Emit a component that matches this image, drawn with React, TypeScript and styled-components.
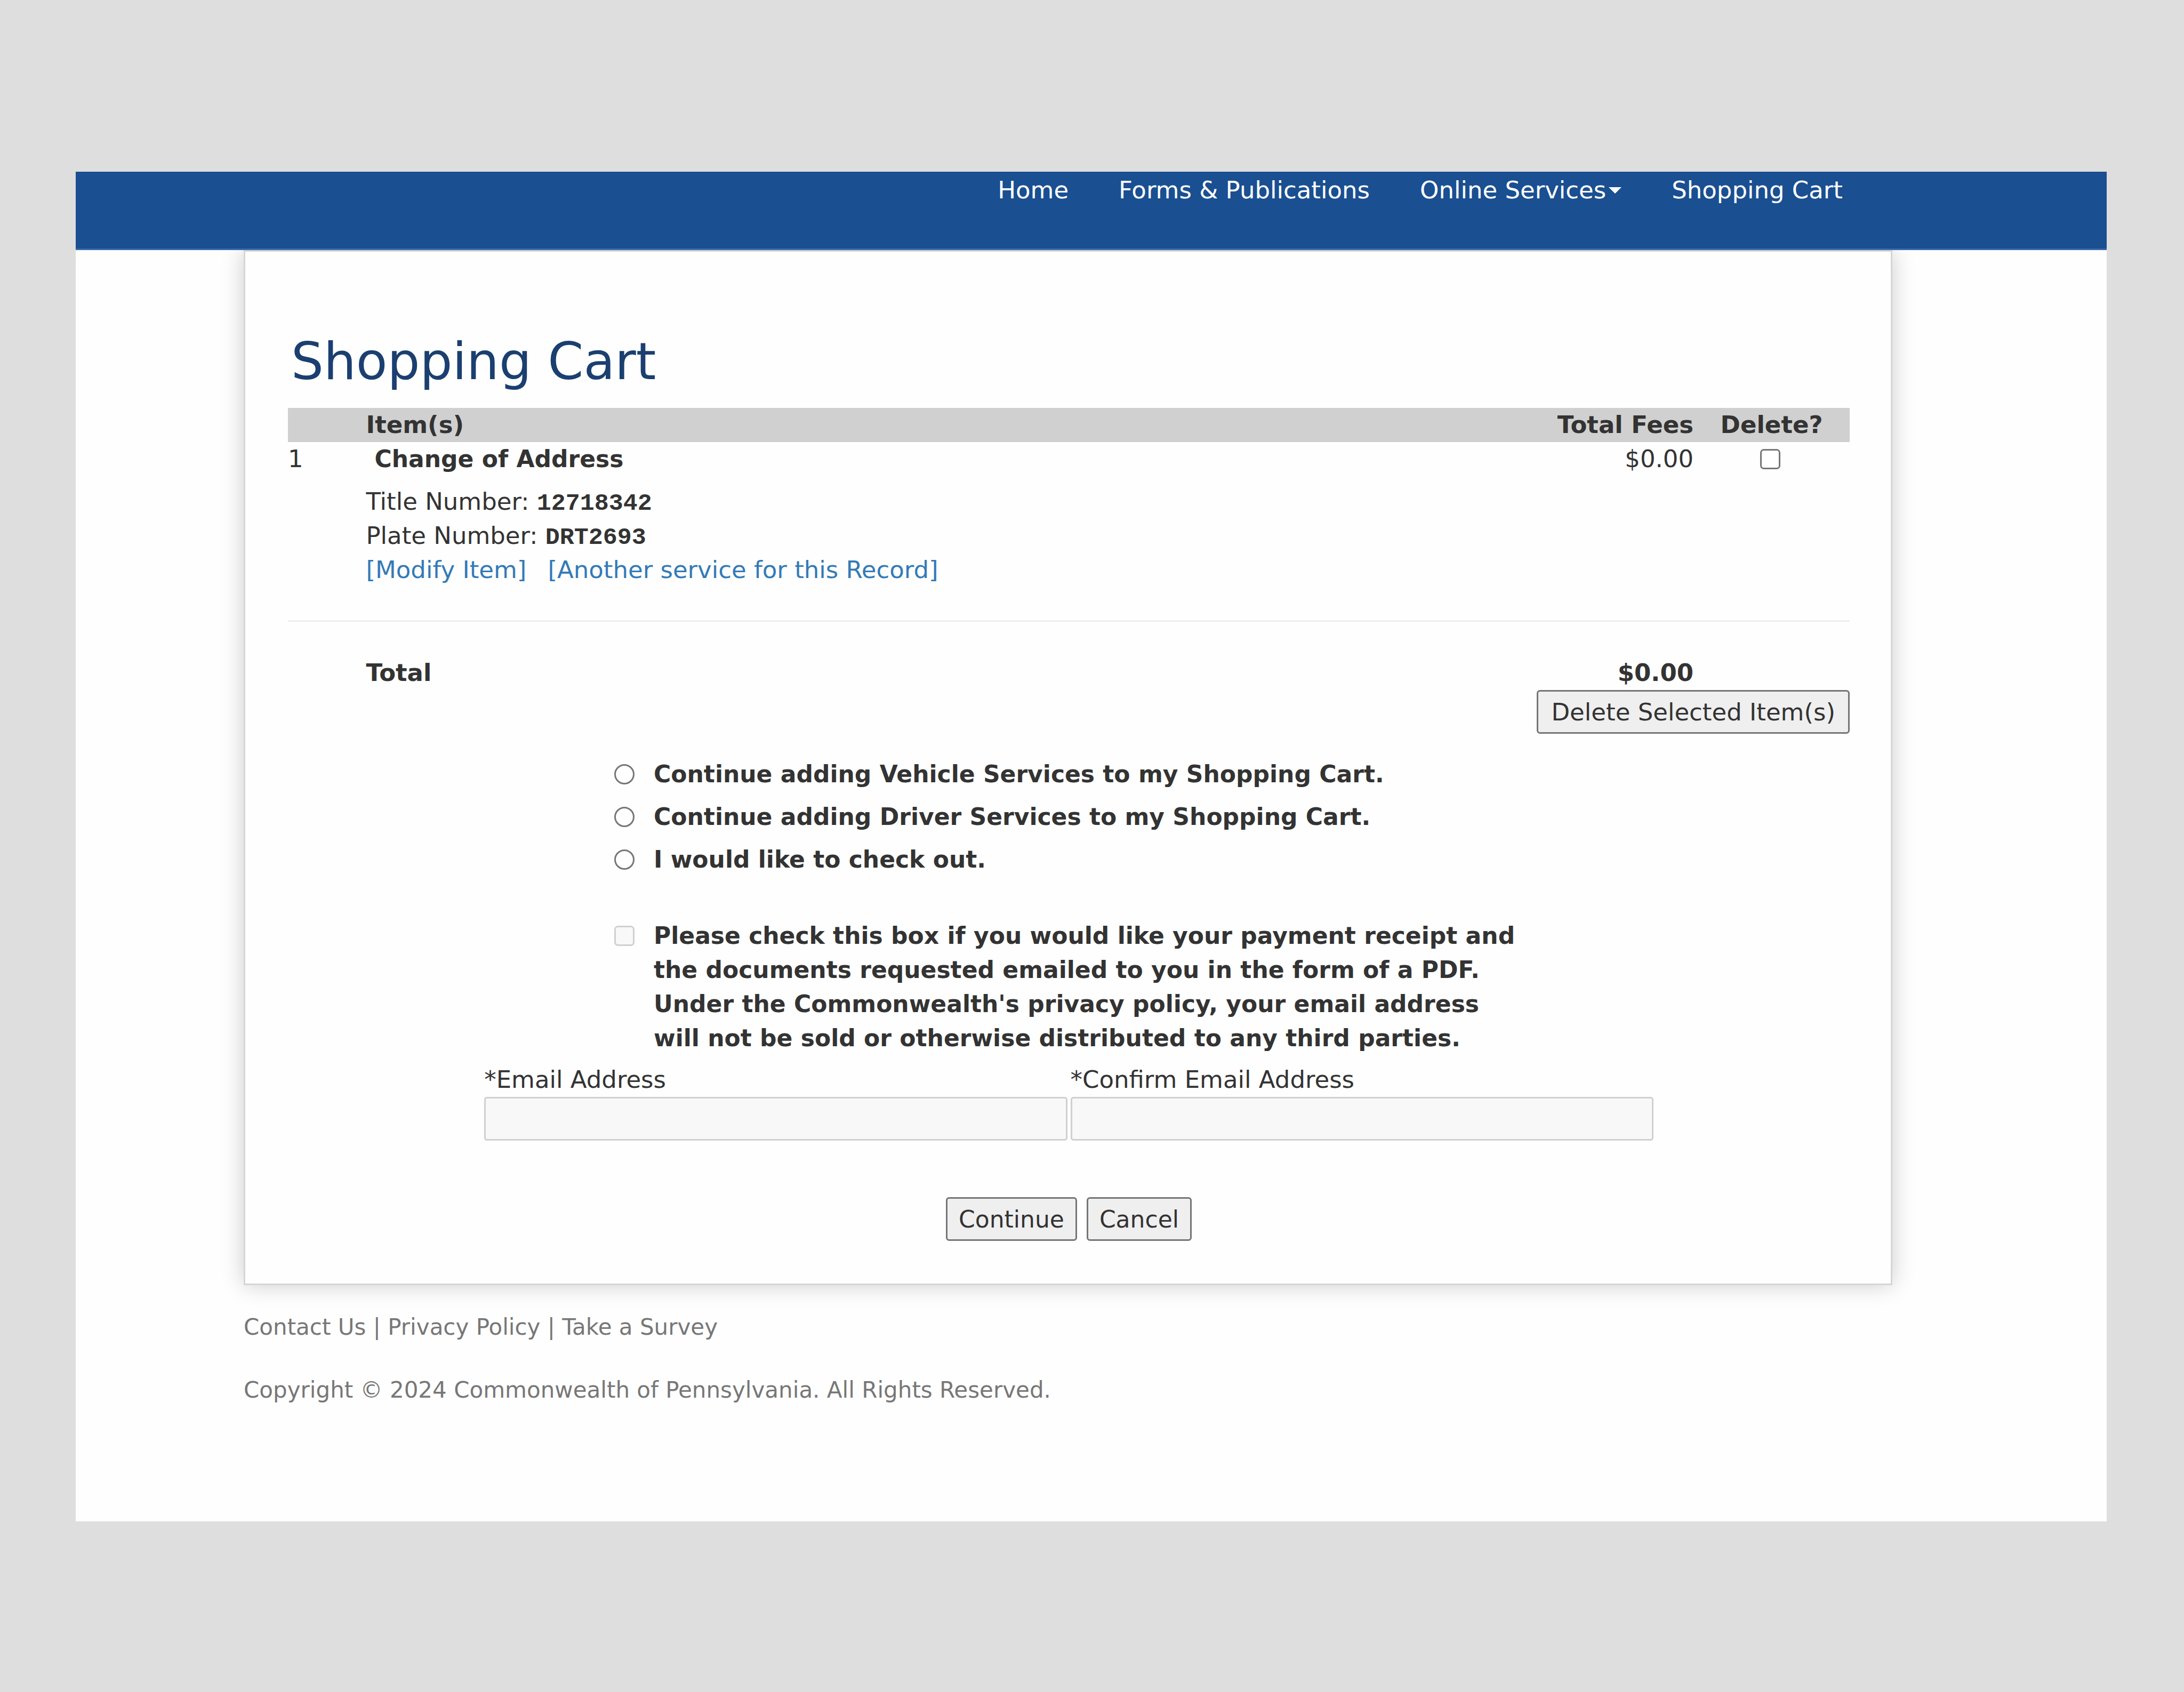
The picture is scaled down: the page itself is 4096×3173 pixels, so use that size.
import React from "react";
import styled, { createGlobalStyle } from "styled-components";

const Global = createGlobalStyle`
  *, *::before, *::after { box-sizing: border-box; }
  body {
    margin: 0;
    background: #dedede;
    color: #333;
    font: 45px/64px "DejaVu Sans", Verdana, sans-serif;
  }
  button, input { font: inherit; color: inherit; margin: 0; }
`;

const Page = styled.div`
  padding: 322px 145px 321px 142px;
`;

const Frame = styled.div`
  background: #fefefe;
`;

const NavBar = styled.nav`
  display: flex;
  justify-content: flex-end;
  gap: 94px;
  height: 147px;
  padding-right: 495px;
  background: #1a4f91;
  border-bottom: 3px solid #3a69ab;
`;

const NavLink = styled.a`
  display: flex;
  align-items: center;
  height: 70px;
  color: #fff;
  text-decoration: none;
`;

const Caret = styled.span`
  width: 24px;
  margin-left: 5px;
  border: 12px solid transparent;
  border-top-color: #fff;
  border-bottom: 0;
`;

const Card = styled.main`
  margin: 0 402px 0 315px;
  padding: 156px 77px 80px 80px;
  border: 3px solid #d6d6d6;
  box-shadow: 0 0 40px rgba(0, 0, 0, 0.2);
  clip-path: inset(0 -80px -80px -80px);
`;

const Title = styled.h1`
  margin: 0 0 37px;
  padding: 0 6px;
  font-size: 96px;
  font-weight: 400;
  line-height: 100px;
  color: #1a3f70;
`;

const CartTable = styled.table`
  width: 100%;
  table-layout: fixed;
  border-collapse: collapse;
`;

const Col = styled.col<{ $share: number }>`
  width: ${(p) => p.$share}%;
`;

const Cell = styled.td<{ $align?: string; $strong?: boolean }>`
  padding: 0;
  vertical-align: top;
  text-align: ${(p) => p.$align ?? "left"};
  font-weight: ${(p) => (p.$strong ? 700 : 400)};
`;

const TickCell = styled(Cell)`
  padding-right: 6px;
`;

const HeadRow = styled.tr`
  background: #d0d0d0;
`;

const ItemName = styled.div`
  margin: 0 0 16px 16px;
  font-size: 44px;
  font-weight: 700;
`;

const Code = styled.span`
  font: 700 45px/45px "Liberation Mono", monospace;
`;

const Links = styled.div`
  display: flex;
  gap: 40px;
`;

const TextLink = styled.a`
  color: #337ab7;
  text-decoration: none;
`;

const RuleCell = styled.td`
  padding: 62px 0 64px;
`;

const Rule = styled.hr`
  margin: 0;
  border: 0;
  border-top: 3px solid #eee;
`;

const Tick = styled.input`
  appearance: none;
  display: block;
  flex: none;
  width: 38px;
  height: 38px;
  margin: 13px auto;
  border: 3px solid #767676;
  border-radius: ${(p) => (p.type === "radio" ? "50%" : "7px")};
  background: #fff;
  &:disabled {
    border-color: #d0d0d0;
    background: #f8f8f8;
  }
`;

const Button = styled.button<{ $compact?: boolean }>`
  padding: ${(p) => (p.$compact ? "7px 21px 5px" : "7px 24px 5px")};
  border: 3px solid #767676;
  border-radius: 6px;
  background: #efefef;
  font-size: ${(p) => (p.$compact ? 44 : 45)}px;
`;

const ActionRow = styled.div<{ $align: string }>`
  display: flex;
  justify-content: ${(p) => p.$align};
  gap: 18px;
`;

const Choices = styled.div`
  display: flex;
  flex-direction: column;
  gap: 16px;
  margin: 44px 0 79px 612px;
`;

const Choice = styled.label`
  display: flex;
  align-items: flex-start;
  gap: 36px;
  max-width: 1704px;
  font-size: 44px;
  font-weight: 700;
  ${Tick} { margin: 13px 0; }
`;

const Receipt = styled.div`
  margin: 0 0 14px 612px;
`;

const Emails = styled.div`
  display: grid;
  grid-template-columns: 1fr 1fr;
  gap: 6px;
  width: calc(75% - 4px);
  margin: 0 auto 106px;
`;

const Field = styled.label`
  display: block;
`;

const TextBox = styled.input`
  display: block;
  width: 100%;
  height: 82px;
  border: 3px solid #d0d0d0;
  border-radius: 5px;
  background: #f8f8f8;
`;

const Footer = styled.footer`
  display: flex;
  flex-direction: column;
  gap: 54px;
  padding: 47px 0 214px 315px;
  color: #777;
  font-size: 42px;
  p { margin: 0; }
`;

const FootLink = styled.a`
  color: inherit;
  text-decoration: none;
`;

const choices = [
  "Continue adding Vehicle Services to my Shopping Cart.",
  "Continue adding Driver Services to my Shopping Cart.",
  "I would like to check out.",
];

export default function App() {
  return (
    <Page>
      <Global />
      <Frame>
        <NavBar>
          <NavLink href="#">Home</NavLink>
          <NavLink href="#">Forms &amp; Publications</NavLink>
          <NavLink href="#">
            Online Services
            <Caret />
          </NavLink>
          <NavLink href="#">Shopping Cart</NavLink>
        </NavBar>
        <Card>
          <Title>Shopping Cart</Title>
          <CartTable>
            <colgroup>
              <Col $share={5} />
              <Col $share={65} />
              <Col $share={20} />
              <Col $share={10} />
            </colgroup>
            <thead>
              <HeadRow>
                <Cell />
                <Cell as="th" scope="col" $strong>Item(s)</Cell>
                <Cell as="th" scope="col" $strong $align="right">Total Fees</Cell>
                <Cell as="th" scope="col" $strong $align="center">Delete?</Cell>
              </HeadRow>
            </thead>
            <tbody>
              <tr>
                <Cell>1</Cell>
                <Cell>
                  <ItemName>Change of Address</ItemName>
                  <div>Title Number: <Code>12718342</Code></div>
                  <div>Plate Number: <Code>DRT2693</Code></div>
                  <Links>
                    <TextLink href="#">[Modify Item]</TextLink>
                    <TextLink href="#">[Another service for this Record]</TextLink>
                  </Links>
                </Cell>
                <Cell $align="right">$0.00</Cell>
                <TickCell><Tick type="checkbox" aria-label="Delete item 1" /></TickCell>
              </tr>
              <tr>
                <RuleCell colSpan={4}><Rule /></RuleCell>
              </tr>
              <tr>
                <Cell />
                <Cell $strong>Total</Cell>
                <Cell $strong $align="right">$0.00</Cell>
                <Cell />
              </tr>
            </tbody>
          </CartTable>
          <ActionRow $align="flex-end">
            <Button type="button">Delete Selected Item(s)</Button>
          </ActionRow>
          <Choices>
            {choices.map((text) => (
              <Choice key={text}>
                <Tick type="radio" name="next" />
                {text}
              </Choice>
            ))}
          </Choices>
          <Receipt>
            <Choice>
              <Tick type="checkbox" disabled />
              Please check this box if you would like your payment receipt and the
              documents requested emailed to you in the form of a PDF. Under the
              Commonwealth's privacy policy, your email address will not be sold or
              otherwise distributed to any third parties.
            </Choice>
          </Receipt>
          <Emails>
            <Field>
              *Email Address
              <TextBox type="email" disabled />
            </Field>
            <Field>
              *Confirm Email Address
              <TextBox type="email" disabled />
            </Field>
          </Emails>
          <ActionRow $align="center">
            <Button type="button" $compact>Continue</Button>
            <Button type="button" $compact>Cancel</Button>
          </ActionRow>
        </Card>
        <Footer>
          <p>
            <FootLink href="#">Contact Us</FootLink> | <FootLink href="#">Privacy Policy</FootLink> |{" "}
            <FootLink href="#">Take a Survey</FootLink>
          </p>
          <p>Copyright © 2024 Commonwealth of Pennsylvania. All Rights Reserved.</p>
        </Footer>
      </Frame>
    </Page>
  );
}
